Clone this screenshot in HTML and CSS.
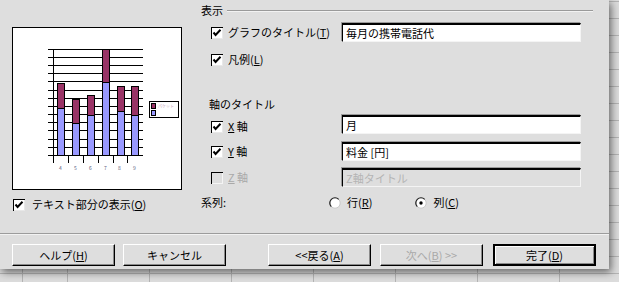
FILE: index.html
```html
<!DOCTYPE html>
<html lang="ja">
<head>
<meta charset="utf-8">
<title>グラフ</title>
<link rel="stylesheet" href="styles.css">
</head>
<body>
<div class="dialog">
  <div class="top">
    <div class="left">
      <div class="preview">
        <svg width="170" height="163" viewBox="0 0 170 163">
          <rect x="0.5" y="0.5" width="169" height="162" fill="#fff" stroke="#000"/>
          <g stroke="#000" stroke-width="1" fill="none" shape-rendering="crispEdges">
            <path d="M36 22.5H131M36 30.5H131M36 38.5H131M36 46.5H131M36 54.5H131M36 63.5H131M36 71.5H131M36 79.5H131M36 87.5H131M36 95.5H131M36 103.5H131M36 112.5H131M36 120.5H131M36 128.5H131"/>
            <path d="M41.5 22V136M56.5 128V136M71.5 128V136M86.5 128V136M101.5 128V136M115.5 128V136"/>
          </g>
          <g stroke="#000" stroke-width="1" shape-rendering="crispEdges">
            <rect x="45.5" y="56.5" width="7" height="25" fill="#993366"/>
            <rect x="45.5" y="81.5" width="7" height="47" fill="#9999ff"/>
            <rect x="60.5" y="72.5" width="7" height="24" fill="#993366"/>
            <rect x="60.5" y="96.5" width="7" height="32" fill="#9999ff"/>
            <rect x="75.5" y="68.5" width="7" height="20" fill="#993366"/>
            <rect x="75.5" y="88.5" width="7" height="40" fill="#9999ff"/>
            <rect x="90.5" y="22.5" width="7" height="33" fill="#993366"/>
            <rect x="90.5" y="55.5" width="7" height="73" fill="#9999ff"/>
            <rect x="105.5" y="59.5" width="7" height="25" fill="#993366"/>
            <rect x="105.5" y="84.5" width="7" height="44" fill="#9999ff"/>
            <rect x="119.5" y="59.5" width="7" height="29" fill="#993366"/>
            <rect x="119.5" y="88.5" width="7" height="40" fill="#9999ff"/>
            <rect x="137.5" y="74.5" width="29" height="16" fill="#fff"/>
            <rect x="139.5" y="76.5" width="4" height="5" fill="#993366"/>
            <rect x="139.5" y="83.5" width="4" height="5" fill="#9999ff"/>
          </g>
          <text x="146" y="80.5" class="legtxt">パケット</text>
          <g class="xlab" text-anchor="middle">
            <text x="48.5" y="143">4</text>
            <text x="63.5" y="143">5</text>
            <text x="78.5" y="143">6</text>
            <text x="93.5" y="143">7</text>
            <text x="107.5" y="143">8</text>
            <text x="122.5" y="143">9</text>
          </g>
        </svg>
      </div>
      <div class="row opt">
        <span class="lbl">
          <svg class="cb" width="12" height="12" viewBox="0 0 12 12"><rect x="0" y="0" width="12" height="12" fill="#000"/><rect x="1" y="1" width="11" height="11" fill="#e8e8e8"/><rect x="1" y="1" width="10" height="10" fill="#fff"/><path d="M2.5 5.5L4.6 8L9.5 2.8" fill="none" stroke="#000" stroke-width="2"/></svg>
          <span>テキスト部分の表示(<u>O</u>)</span>
        </span>
      </div>
    </div>

    <div class="right">
      <div class="legend-row"><span>表示</span><span class="rule"></span></div>

      <div class="row r1">
        <span class="lbl">
          <svg class="cb" width="12" height="12" viewBox="0 0 12 12"><rect x="0" y="0" width="12" height="12" fill="#000"/><rect x="1" y="1" width="11" height="11" fill="#e8e8e8"/><rect x="1" y="1" width="10" height="10" fill="#fff"/><path d="M2.5 5.5L4.6 8L9.5 2.8" fill="none" stroke="#000" stroke-width="2"/></svg>
          <span>グラフのタイトル(<u>T</u>)</span>
        </span>
        <span class="field">毎月の携帯電話代</span>
      </div>

      <div class="row r2">
        <span class="lbl">
          <svg class="cb" width="12" height="12" viewBox="0 0 12 12"><rect x="0" y="0" width="12" height="12" fill="#000"/><rect x="1" y="1" width="11" height="11" fill="#e8e8e8"/><rect x="1" y="1" width="10" height="10" fill="#fff"/><path d="M2.5 5.5L4.6 8L9.5 2.8" fill="none" stroke="#000" stroke-width="2"/></svg>
          <span>凡例(<u>L</u>)</span>
        </span>
      </div>

      <div class="row r3"><span class="heading">軸のタイトル</span></div>

      <div class="row r4">
        <span class="lbl">
          <svg class="cb" width="12" height="12" viewBox="0 0 12 12"><rect x="0" y="0" width="12" height="12" fill="#000"/><rect x="1" y="1" width="11" height="11" fill="#e8e8e8"/><rect x="1" y="1" width="10" height="10" fill="#fff"/><path d="M2.5 5.5L4.6 8L9.5 2.8" fill="none" stroke="#000" stroke-width="2"/></svg>
          <span><u>X</u> 軸</span>
        </span>
        <span class="field">月</span>
      </div>

      <div class="row r5">
        <span class="lbl">
          <svg class="cb" width="12" height="12" viewBox="0 0 12 12"><rect x="0" y="0" width="12" height="12" fill="#000"/><rect x="1" y="1" width="11" height="11" fill="#e8e8e8"/><rect x="1" y="1" width="10" height="10" fill="#fff"/><path d="M2.5 5.5L4.6 8L9.5 2.8" fill="none" stroke="#000" stroke-width="2"/></svg>
          <span><u>Y</u> 軸</span>
        </span>
        <span class="field">料金 [円]</span>
      </div>

      <div class="row r6 disabled">
        <span class="lbl">
          <svg class="cb" width="12" height="12" viewBox="0 0 12 12"><rect x="0" y="0" width="12" height="12" fill="#000"/><rect x="1" y="1" width="11" height="11" fill="#f4f4f4"/><rect x="1" y="1" width="10" height="10" fill="#dedede"/></svg>
          <span><u>Z</u> 軸</span>
        </span>
        <span class="field">Z軸タイトル</span>
      </div>

      <div class="row r7">
        <span class="series">系列:</span>
        <span class="radio">
          <svg width="12" height="12" viewBox="0 0 12 12"><circle cx="6" cy="6" r="5.2" fill="#fff" stroke="#c8c8c8"/><path d="M2.3 9.7A5.2 5.2 0 0 1 9.7 2.3" fill="none" stroke="#222" stroke-width="1.2"/></svg>
          <span>行(<u>R</u>)</span>
        </span>
        <span class="radio r-second">
          <svg width="12" height="12" viewBox="0 0 12 12"><circle cx="6" cy="6" r="5.2" fill="#fff" stroke="#c8c8c8"/><path d="M2.3 9.7A5.2 5.2 0 0 1 9.7 2.3" fill="none" stroke="#222" stroke-width="1.2"/><circle cx="6" cy="6" r="1.7" fill="#000"/></svg>
          <span>列(<u>C</u>)</span>
        </span>
      </div>
    </div>
  </div>

  <div class="sep"></div>

  <div class="buttons">
    <span class="btn b-help">ヘルプ(<u>H</u>)</span>
    <span class="btn b-cancel">キャンセル</span>
    <span class="btn b-back">&lt;&lt;戻る(<u>A</u>)</span>
    <span class="btn b-next dim">次へ(<u>B</u>) &gt;&gt;</span>
    <span class="btn b-finish default">完了(<u>D</u>)</span>
  </div>
</div>
</body>
</html>
```

FILE: styles.css
```css
html, body {
  margin: 0;
  padding: 0;
}
body {
  width: 619px;
  height: 282px;
  overflow: hidden;
  background-color: #dcdcdc;
  background-image:
    repeating-linear-gradient(to bottom, #b4b4b4 0 1px, transparent 1px 17px),
    repeating-linear-gradient(to right, #b4b4b4 0 1px, transparent 1px 82px);
  background-position: 0 1px, 67px 0;
  font-family: "Noto Sans CJK JP", "Liberation Sans", sans-serif;
  font-size: 11px;
  color: #000;
}
u { text-underline-offset: 1px; }

.dialog {
  width: 609px;
  height: 269px;
  background: #dedede;
  box-shadow: 2px 3px 8px rgba(0, 0, 0, 0.55);
  display: flex;
  flex-direction: column;
}

.top {
  height: 233px;
  display: flex;
  padding-left: 12px;
}

.left {
  width: 170px;
  display: flex;
  flex-direction: column;
}
.preview {
  margin-top: 27px;
  width: 170px;
  height: 163px;
}
.preview svg { display: block; }
.legtxt { font-size: 4px; fill: #c7a3b8; }
.xlab { font-size: 5px; fill: #5a6080; }

.row {
  display: flex;
  align-items: center;
  height: 19px;
}
.lbl {
  display: flex;
  align-items: center;
  gap: 5px;
  line-height: 1;
}
.cb { display: block; flex: none; }

.opt { margin-top: 5px; }
.opt .lbl { padding-left: 1px; gap: 7px; }

.right {
  margin-left: 19px;
  width: 392px;
  display: flex;
  flex-direction: column;
}
.right .lbl {
  width: 131px;
  padding-left: 10px;
}
.legend-row {
  height: 20px;
  display: flex;
  align-items: center;
  gap: 4px;
  line-height: 1;
}
.rule {
  flex: 1;
  height: 0;
  border-top: 1px solid #9a9a9a;
  border-bottom: 1px solid #f2f2f2;
  margin-top: 2px;
}

.field {
  box-sizing: border-box;
  width: 239px;
  height: 19px;
  background: #fff;
  border-top: 2px solid #000;
  border-left: 1px solid #000;
  border-right: 1px solid #f4f4f4;
  border-bottom: 1px solid #f4f4f4;
  box-shadow: -1px -1px 0 #9a9a9a;
  padding-left: 3px;
  display: flex;
  align-items: center;
  line-height: 1;
}

.r1 { margin-top: 3px; }
.r2 { margin-top: 8px; }
.r3 { margin-top: 26px; }
.heading { padding-left: 8px; line-height: 1; }
.r4 { margin-top: 1px; }
.r4 .lbl { margin-top: 4px; }
.r5 { margin-top: 8px; }
.r6 { margin-top: 7px; }
.r7 { margin-top: 6px; }

.disabled .lbl { color: #a9a9a9; }
.disabled .field {
  background: #dedede;
  color: #b4b4b4;
}

.series { width: 128px; line-height: 1; }
.radio {
  display: flex;
  align-items: center;
  gap: 6px;
  line-height: 1;
}
.radio svg { display: block; }
.r-second { margin-left: 43px; }

.sep {
  height: 0;
  border-top: 1px solid #9c9c9c;
  border-bottom: 1px solid #f2f2f2;
}

.buttons {
  display: flex;
  margin-top: 9px;
  padding-left: 12px;
}
.btn {
  box-sizing: border-box;
  width: 103px;
  height: 22px;
  display: flex;
  align-items: center;
  justify-content: center;
  line-height: 1;
  background: #dedede;
  border-top: 1px solid #fff;
  border-left: 1px solid #fff;
  border-right: 1px solid #000;
  border-bottom: 1px solid #000;
  box-shadow: inset -1px -1px 0 #8a8a8a;
}
.b-cancel { margin-left: 8px; }
.b-back { margin-left: 42px; }
.b-next { margin-left: 9px; }
.b-finish { margin-left: 10px; }
.dim { color: #a9a9a9; }
.default {
  border: 2px solid #000;
  box-shadow: inset 1px 1px 0 #fff, inset -1px -1px 0 #8a8a8a;
}
```
